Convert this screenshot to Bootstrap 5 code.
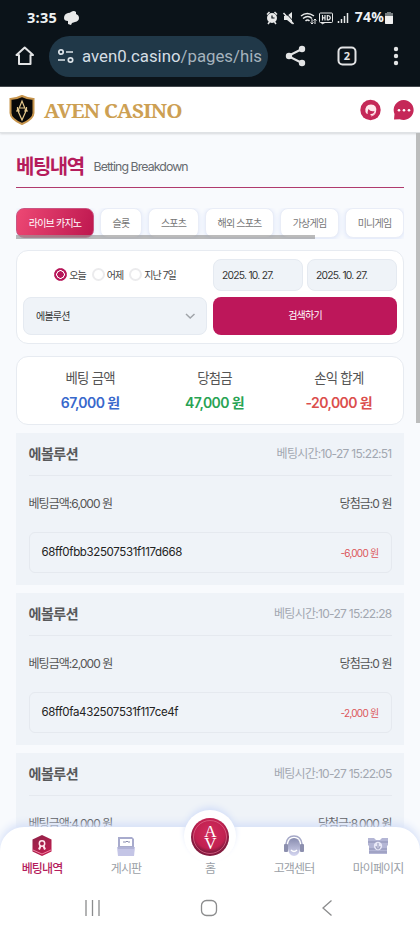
<!DOCTYPE html>
<html lang="ko">
<head>
<meta charset="utf-8">
<meta name="viewport" content="width=device-width, initial-scale=1">
<title>AVEN CASINO</title>
<link href="https://cdn.jsdelivr.net/npm/bootstrap@5.3.0/dist/css/bootstrap.min.css" rel="stylesheet">
<style>
body{font-family:Inter,"Noto Sans CJK KR",sans-serif;background:#f8fafd;color:#555;line-height:1.2}
.screen{width:420px;height:933px}
.sysbar{height:34px;background:#0b1319;padding:1px 26px 0 27px;color:#eef1f3;font-family:"Open Sans",sans-serif;font-weight:700}
.sysbar .clock{font-size:14.5px;width:36px;letter-spacing:.3px}
.sysbar .batt{font-size:14px;letter-spacing:.2px}
.urlbar{height:53px;background:#0b1319;padding:5px 12px 13px 14px;border-bottom:1px solid #44494e}
.addr{width:219px;height:41px;background:#203848;margin-left:13px;padding-left:8px;color:#d5dee4;font:16.8px Roboto,sans-serif}
.addr .path{color:#a5b3bd}
.addr .clip{width:180px;margin-left:7px}
.brand{height:46px;border-bottom:1px solid #dfe2e5;box-shadow:0 1px 2px #0002;padding:0 6px 0 9px;z-index:2}
.brand-name{font:700 20.7px "Noto Serif","Liberation Serif",serif;color:#cda053;margin-left:9px;white-space:pre;letter-spacing:-.72px}
.content-area{padding:0 16px;height:694px}
.titlebar{height:55px;border-bottom:1px solid #b03a6d;padding-top:14px}
.titlebar h1{font-size:20px;color:#b51c5c;letter-spacing:-1.5px;margin:0;line-height:40px}
.titlebar small{font-size:12.3px;letter-spacing:-.9px;line-height:40px;margin-left:10px;color:#676a6f}
.tabs{margin-top:20px;height:31px;gap:6px}
.tab{height:30px;background:#fff;border:1px solid #e9edf7;border-radius:8px;font-size:10px;letter-spacing:-.8px;color:#777;box-shadow:0 1px 5px #dbe4fa;flex:none}
.tab.on{background:linear-gradient(110deg,#ed4874,#bd174f);color:#fff;border-color:#c95683}
.thumb{left:0;bottom:0;width:299px;height:4px;background:#999a;}
.panel{background:#fff;border:1px solid #e7ebf1;border-radius:12px}
.filters{margin-top:11px;height:94px;padding:8px 6px}
.field{background:#eff3f8;border:1px solid #e5eaf1;border-radius:8px;font-size:10px;color:#333}
.g6{gap:6px}
.half{width:184px}
.dates{height:32px;gap:4px}
.dates .field{width:90px;padding-left:8px;letter-spacing:-.75px;font-size:10.3px}
.radios{height:32px;font-size:10px;letter-spacing:-.95px;color:#444}
.dot{width:13px;height:13px;border:2px solid #ebebed;border-radius:50%;margin-right:2px;background:#fff}
.dot.on{border:1.5px solid #b71659;background:radial-gradient(circle,#b71659 0 3px,#fff 3.4px 4px,#b71659 4.5px)}
.sel{height:39px;padding:0 10px 0 12px;letter-spacing:-.8px}
.go{height:39px;background:#bd175a;border:0;border-radius:8px;color:#fff;font-size:10px;letter-spacing:-.8px;padding:0}
.totals{margin-top:12px;height:69px;padding:13px 2px 0 11px}
.totals .cap{font-size:13.4px;letter-spacing:-.75px;line-height:16px}
.totals .num{font-size:14px;font-weight:600;letter-spacing:-.6px;line-height:18px;margin-top:8px}
.bet{background:#eff3f8;margin-top:8px;height:152px;padding:0 12.5px}
.bet-head{height:43px;border-bottom:1px solid #e5e9ef}
.bet-name{font-size:14px;font-weight:600;letter-spacing:-.45px;color:#58595b}
.bet-time{font-size:12px;letter-spacing:-.72px;color:#a2a7b0}
.bet-row{height:56px;font-size:12px;letter-spacing:-.95px}
.bet-box{height:41px;border:1px solid #e5e9ef;border-radius:6px;padding:0 12px;color:#222;font-size:11.5px;letter-spacing:-.36px}
.loss{font-size:10px;color:#dc5558;letter-spacing:-.75px}
.pagebar{right:0;top:133px;width:4px;height:290px;background:#bcbdbd;z-index:3}
.dock{left:0;bottom:0;width:420px;height:106px;background:#fff;border-radius:24px 24px 0 0;box-shadow:0 -3px 9px #d4dff8}
.dock-items{height:58px}
.dock-item{width:84px;font-size:12px;letter-spacing:-.9px;color:#9b9fa7;padding-top:8px}
.dock-item svg{height:23px;flex:none}
.dock-item span{line-height:16px;margin-top:3px}
.dock-item.on{color:#b51c5c;font-weight:500}
.bump{left:184px;top:-17px;width:52px;height:52px;background:#fff;border-radius:50%;box-shadow:0 -4px 6px -1px #d4dff8}
.home-icon{margin-top:-18px}
.dock-item .home-icon{height:40px}
.sysnav{height:48px;padding:0 87px 2px 84px}
.chat-icon{margin-left:12px}
</style>
<script src="https://cdn.jsdelivr.net/npm/bootstrap@5.3.0/dist/js/bootstrap.bundle.min.js"></script>
</head>
<body>
<div class="screen position-relative overflow-hidden">
  <div class="sysbar d-flex align-items-center">
    <span class="clock">3:35</span>
    <svg width="17" height="16" viewBox="0 0 17 16"><path fill="#e8e9e9" d="M1 8Q1 4 5 3q2 0 3-1 3-2 5 0v2q3 1 3 4 0 3-4 4l-3 1-1 2-3-1v-3Q1 11 1 8z"/></svg>
    <svg class="ms-auto" width="86" height="18" viewBox="0 0 86 18" fill="none" stroke="#e8e9e9" stroke-width="1.5">
      <circle cx="7" cy="9" r="4" fill="#e8e9e9" stroke-width="2"/><path d="M7 6.500V9h2.500" stroke="#0b1319" stroke-width="1.200"/><path d="M2 5.500l2.500-2.500M12 5.500 9.500 3M3 15l1.500-2M11 15l-1.500-2"/>
      <path d="M19 7v4h3l5 4V3l-5 4z" fill="#e8e9e9" stroke="none"/><path d="m18.500 4 10 11"/><path d="m20 3 10 11" stroke="#0b1319" stroke-width="1"/>
      <path d="M36 7q6-5 13 0M38 9.500q5-4 9 0M40.500 12q2-2 4 0"/><path d="M47 10v5m-1.500-1.500L47 15l1.500-1.500M50 15v-5m-1.500 1.500L50 10l1.500 1.500" stroke-width="1"/>
      <rect x="54.500" y="4" width="13" height="9.500" rx="1" stroke-width="1"/><path d="M57.500 6v5.500m0-2.700h2.500M60 6v5.500M62.300 6.500v4.500q3 0 3-2.200t-3-2.300z" stroke-width="1.200"/><path d="M57 13v2l3-1.500" stroke-width="1"/>
      <path d="M73.500 14v-2M76.500 14v-4M79.500 14V7M82.500 14V4"/>
    </svg>
    <span class="batt ms-1">74%</span>
    <svg width="10" height="14" viewBox="0 0 10 14"><path d="M3 1h4v1h2v11H1V2h2z" fill="#777d80"/><path d="M1 5h8v7q0 1-1 1H2q-1 0-1-1z" fill="#f0f0f0"/></svg>
  </div>
  <div class="urlbar d-flex align-items-center">
    <svg width="22" height="22" viewBox="0 0 22 22" fill="none" stroke="#e3e4e5" stroke-width="2"><path d="M5 10H2.500L10.700 2.500 19 10h-2.500v9H5z" stroke-linejoin="round"/></svg>
    <div class="addr rounded-pill d-flex align-items-center">
      <svg width="18" height="16" viewBox="0 0 18 16" fill="none" stroke="#dce3e8" stroke-width="1.700"><circle cx="4" cy="4" r="2.200"/><path d="M9 4h7M1 12h7"/><circle cx="13.500" cy="12" r="2.200"/></svg>
      <div class="clip overflow-hidden text-nowrap">aven0.casino<span class="path">/pages/hist</span></div>
    </div>
    <svg class="ms-auto" width="124" height="24" viewBox="0 0 124 24" fill="none" stroke="#e3e4e5" stroke-width="2"><path d="M18 5 4 12l14 7"/><g fill="#e3e4e5" stroke="none"><circle cx="18" cy="5" r="3.200"/><circle cx="5" cy="12" r="3.200"/><circle cx="18" cy="19" r="3.200"/><circle cx="112" cy="5" r="2.200"/><circle cx="112" cy="12" r="2.200"/><circle cx="112" cy="19" r="2.200"/></g><rect x="54.500" y="3.500" width="17" height="17" rx="4"/><text x="59.800" y="16" font-size="11" font-weight="700" font-family="Open Sans" fill="#e3e4e5" stroke="none">2</text></svg>
  </div>
  <header class="brand bg-white d-flex align-items-center position-relative">
    <svg width="26" height="32" viewBox="0 0 26 32"><path d="M13 2q6 3 11.500 3v14q0 6-11.500 11Q1.500 25 1.500 19V5Q7 5 13 2z" fill="#090909" stroke="#c7954d" stroke-width="2"/><path d="m9 17 4-10 4 10m-6-3h4m-8 3h4m4 0h4m-10 0 4 9 4-9M8.500 13v4m9-4v4" fill="none" stroke="#e5c98d" stroke-width="1.200"/></svg>
    <span class="brand-name">AVEN CASINO</span>
    <svg class="ms-auto" width="21" height="22" viewBox="0 0 21 22"><circle cx="10.500" cy="11" r="10.200" fill="#c52858"/><path d="M5.500 13Q4.500 5.500 11 5.500T16 13l-1 2q-2 2-5 1l1-1q3 0 3.500-3-4 1-6-2Q7 14 8 15q-2 0-2.500-2z" fill="#ffe8ed"/><path d="M15 14q-1 3-4 3" stroke="#f7bdcc" fill="none"/></svg>
    <svg class="chat-icon" width="21" height="22" viewBox="0 0 21 22"><path d="M10.700 1a10 10 0 1 1-4 19.200L1 20.500 1.500 15A10 10 0 0 1 10.700 1z" fill="#c52858"/><g fill="#fff"><circle cx="6" cy="11.300" r="1.300"/><circle cx="11" cy="11.300" r="1.300"/><circle cx="16" cy="11.300" r="1.300"/></g></svg>
  </header>
  <main class="content-area overflow-hidden">
    <div class="titlebar d-flex align-items-center"><h1 class="fw-bold">베팅내역</h1><small>Betting Breakdown</small></div>
    <div class="tabs d-flex position-relative overflow-hidden">
      <div class="tab on d-flex align-items-center justify-content-center" style="width:78px">라이브 카지노</div>
      <div class="tab d-flex align-items-center justify-content-center" style="width:42px">슬롯</div>
      <div class="tab d-flex align-items-center justify-content-center" style="width:51px">스포츠</div>
      <div class="tab d-flex align-items-center justify-content-center" style="width:69px">해외 스포츠</div>
      <div class="tab d-flex align-items-center justify-content-center" style="width:59px">가상게임</div>
      <div class="tab d-flex align-items-center justify-content-center" style="width:59px">미니게임</div>
      <div class="thumb position-absolute"></div>
    </div>
    <section class="panel filters d-flex g6">
      <div class="half d-flex flex-column g6">
        <div class="radios d-flex align-items-center justify-content-center g6">
          <span class="d-flex align-items-center"><i class="dot on"></i>오늘</span>
          <span class="d-flex align-items-center"><i class="dot"></i>어제</span>
          <span class="d-flex align-items-center"><i class="dot"></i>지난 7일</span>
        </div>
        <div class="field sel d-flex align-items-center justify-content-between">에볼루션
          <svg width="12" height="8" viewBox="0 0 12 8" fill="none" stroke="#a0a4a9" stroke-width="1.500"><path d="m2 2 4.200 4L10.500 2"/></svg></div>
      </div>
      <div class="half d-flex flex-column g6">
        <div class="dates d-flex"><div class="field d-flex align-items-center">2025. 10. 27.</div><div class="field d-flex align-items-center">2025. 10. 27.</div></div>
        <button class="btn go">검색하기</button>
      </div>
    </section>
    <section class="panel totals d-flex text-center">
      <div class="col"><div class="cap">베팅 금액</div><div class="num" style="color:#3868cc">67,000 원</div></div>
      <div class="col"><div class="cap">당첨금</div><div class="num" style="color:#28a353">47,000 원</div></div>
      <div class="col"><div class="cap">손익 합계</div><div class="num" style="color:#db4e4c">-20,000 원</div></div>
    </section>
    <article class="bet">
      <div class="bet-head d-flex align-items-center justify-content-between"><span class="bet-name">에볼루션</span><span class="bet-time">베팅시간:10-27 15:22:51</span></div>
      <div class="bet-row d-flex align-items-center justify-content-between"><span>베팅금액:6,000 원</span><span>당첨금:0 원</span></div>
      <div class="bet-box d-flex align-items-center justify-content-between"><span>68ff0fbb32507531f117d668</span><span class="loss">-6,000 원</span></div>
    </article>
    <article class="bet">
      <div class="bet-head d-flex align-items-center justify-content-between"><span class="bet-name">에볼루션</span><span class="bet-time">베팅시간:10-27 15:22:28</span></div>
      <div class="bet-row d-flex align-items-center justify-content-between"><span>베팅금액:2,000 원</span><span>당첨금:0 원</span></div>
      <div class="bet-box d-flex align-items-center justify-content-between"><span>68ff0fa432507531f117ce4f</span><span class="loss">-2,000 원</span></div>
    </article>
    <article class="bet">
      <div class="bet-head d-flex align-items-center justify-content-between"><span class="bet-name">에볼루션</span><span class="bet-time">베팅시간:10-27 15:22:05</span></div>
      <div class="bet-row d-flex align-items-center justify-content-between"><span>베팅금액:4,000 원</span><span>당첨금:8,000 원</span></div>
    </article>
  </main>
  <div class="pagebar position-absolute"></div>
  <nav class="dock position-absolute">
    <div class="bump position-absolute"></div>
    <div class="dock-items d-flex position-relative">
      <div class="dock-item on d-flex flex-column align-items-center">
        <svg width="22" viewBox="0 0 22 23"><defs><linearGradient id="red" x2=".6" y2="1"><stop stop-color="#8d2348"/><stop offset="1" stop-color="#bd1c4e"/></linearGradient><linearGradient id="lav" x2="0" y2="1"><stop stop-color="#888caf"/><stop offset="1" stop-color="#d6d7f1"/></linearGradient></defs><path d="m11 0 9.500 4.500v12L11 21l-9.500-4.500v-12z" fill="url(#red)"/><path d="m2 15 9 4 9-4" stroke="#ef83a1" fill="none"/><circle cx="11" cy="8.500" r="2.700" fill="none" stroke="#ffe7ed" stroke-width="1.500"/><path d="M9.500 11 8 14.500M12.500 11l1.500 3.500" stroke="#ffe7ed" fill="none" stroke-width="2"/></svg><span>베팅내역</span></div>
      <div class="dock-item d-flex flex-column align-items-center">
        <svg width="20" viewBox="0 0 20 23"><path d="M2 2h14l2 2v17H2z" fill="#a8abcd"/><rect x="4" y="4" width="12" height="7" fill="#fff"/><path d="M7 7h3l1-1 1 1h2" stroke="#888cae" fill="none"/><path d="M1 12h18l-1 9H2z" fill="#c4c5e6"/><path d="M2 13h16" stroke="#9da0c5"/></svg><span>게시판</span></div>
      <div class="dock-item d-flex flex-column align-items-center"><svg class="home-icon" width="40" viewBox="0 0 40 40"><defs><radialGradient id="ball" cy=".4"><stop stop-color="#d12c5d"/><stop offset=".8" stop-color="#c12050"/><stop offset="1" stop-color="#841b3f"/></radialGradient></defs><circle cx="20" cy="20" r="19" fill="url(#ball)"/><circle cx="20" cy="20" r="16.500" fill="none" stroke="#da6387" stroke-width=".8"/><g fill="#fff" text-anchor="middle" font-family="Liberation Serif" font-size="17"><text x="20" y="19.500">A</text><text x="20" y="31.500">V</text></g></svg><span style="margin-top:4px">홈</span></div>
      <div class="dock-item d-flex flex-column align-items-center">
        <svg width="22" viewBox="0 0 22 23"><path d="M3 12V9q1-8 8-8t8 8v3" fill="none" stroke="#a5a8c7" stroke-width="1.500"/><rect x="1" y="9" width="4" height="8" rx="1" fill="#8c8fae"/><rect x="17" y="9" width="4" height="8" rx="1" fill="#8c8fae"/><path d="M5 9q1-6 6-6t6 6v5q-1 7-6 7t-6-7z" fill="url(#lav)"/><path d="M8 15q3 3 6 0" fill="none" stroke="#fff" stroke-width="1.500"/></svg><span>고객센터</span></div>
      <div class="dock-item d-flex flex-column align-items-center">
        <svg width="22" viewBox="0 0 22 23"><path d="M1 3h6l2 2h4l2-2h6v7l-1 1v8H2v-8l-1-1z" fill="#b4b6d5"/><path d="M1 7h20M2 14h18M2 17h18" stroke="#8d90b4"/><circle cx="11" cy="11" r="4.200" fill="#e8e8f7"/><path d="M11 8v5M9 11q0 3 2 3t2-3" stroke="#9295b7" fill="none"/></svg><span>마이페이지</span></div>
    </div>
    <div class="sysnav d-flex align-items-center justify-content-between">
      <svg width="17" height="18" viewBox="0 0 17 18" stroke="#8b8c8d" stroke-width="1.300"><path d="M2 1v16M8.500 1v16M15 1v16"/></svg>
      <svg class="me-1" width="18" height="18" viewBox="0 0 18 18" fill="none" stroke="#8b8c8d" stroke-width="1.300"><rect x="1.500" y="1.500" width="15" height="15" rx="5"/></svg>
      <svg width="12" height="18" viewBox="0 0 12 18" fill="none" stroke="#8b8c8d" stroke-width="1.300"><path d="M10.500 1.500 2 9l8.500 7.500"/></svg>
    </div>
  </nav>
</div>
</body>
</html>
